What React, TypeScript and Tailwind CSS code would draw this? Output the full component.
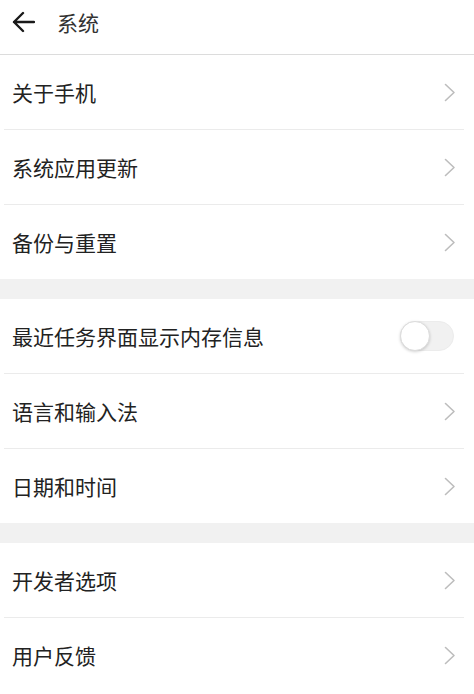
const font = {
  fontFamily: '"Noto Sans CJK SC", "Noto Sans", sans-serif',
};

type Item = { label: string; toggle?: boolean };

const sections: Item[][] = [
  [{ label: "关于手机" }, { label: "系统应用更新" }, { label: "备份与重置" }],
  [
    { label: "最近任务界面显示内存信息", toggle: true },
    { label: "语言和输入法" },
    { label: "日期和时间" },
  ],
  [{ label: "开发者选项" }, { label: "用户反馈" }],
];

function Chevron() {
  return (
    <svg width="12" height="19" viewBox="0 0 12 19" fill="none">
      <path
        d="M1.5 1.5 L10 9.5 L1.5 17.5"
        stroke="#bdbdbd"
        strokeWidth="1.6"
        strokeLinecap="round"
        strokeLinejoin="round"
      />
    </svg>
  );
}

function Toggle() {
  return (
    <div className="relative h-[30px] w-[54px] rounded-full border border-[#ececec] bg-[#f1f1f1]">
      <div className="absolute -left-px -top-px h-[30px] w-[30px] rounded-full border border-[#dcdcdc] bg-white shadow-[0_1px_3px_rgba(0,0,0,0.18)]" />
    </div>
  );
}

function Row({ item, last }: { item: Item; last: boolean }) {
  return (
    <div className="flex flex-col">
      <div className="flex h-[74px] items-center justify-between pl-3 pr-[18px]">
        <span className="text-[21px] leading-none text-[#222]">
          {item.label}
        </span>
        {item.toggle ? (
          <div className="mr-[2px]">
            <Toggle />
          </div>
        ) : (
          <Chevron />
        )}
      </div>
      {!last && <div className="ml-1 mr-[10px] h-px bg-[#ebebeb]" />}
    </div>
  );
}

export default function App() {
  return (
    <div className="h-[694px] w-[474px] overflow-hidden bg-white" style={font}>
      <div className="flex h-[54px] items-center gap-[22px] pb-[10px] pl-3">
        <svg width="23" height="22" viewBox="0 0 23 22" fill="none">
          <path
            d="M11 2 L2 11 L11 20 M2 11 H22"
            stroke="#1a1a1a"
            strokeWidth="2.4"
            strokeLinecap="round"
            strokeLinejoin="round"
          />
        </svg>
        <span className="text-[21px] leading-none text-[#333]">系统</span>
      </div>
      <div className="h-px bg-[#dcdcdc]" />
      {sections.map((sec, i) => (
        <div key={i}>
          {i > 0 && <div className="h-[20px] bg-[#f1f1f1]" />}
          {sec.map((item, j) => (
            <Row key={item.label} item={item} last={j === sec.length - 1} />
          ))}
        </div>
      ))}
    </div>
  );
}
